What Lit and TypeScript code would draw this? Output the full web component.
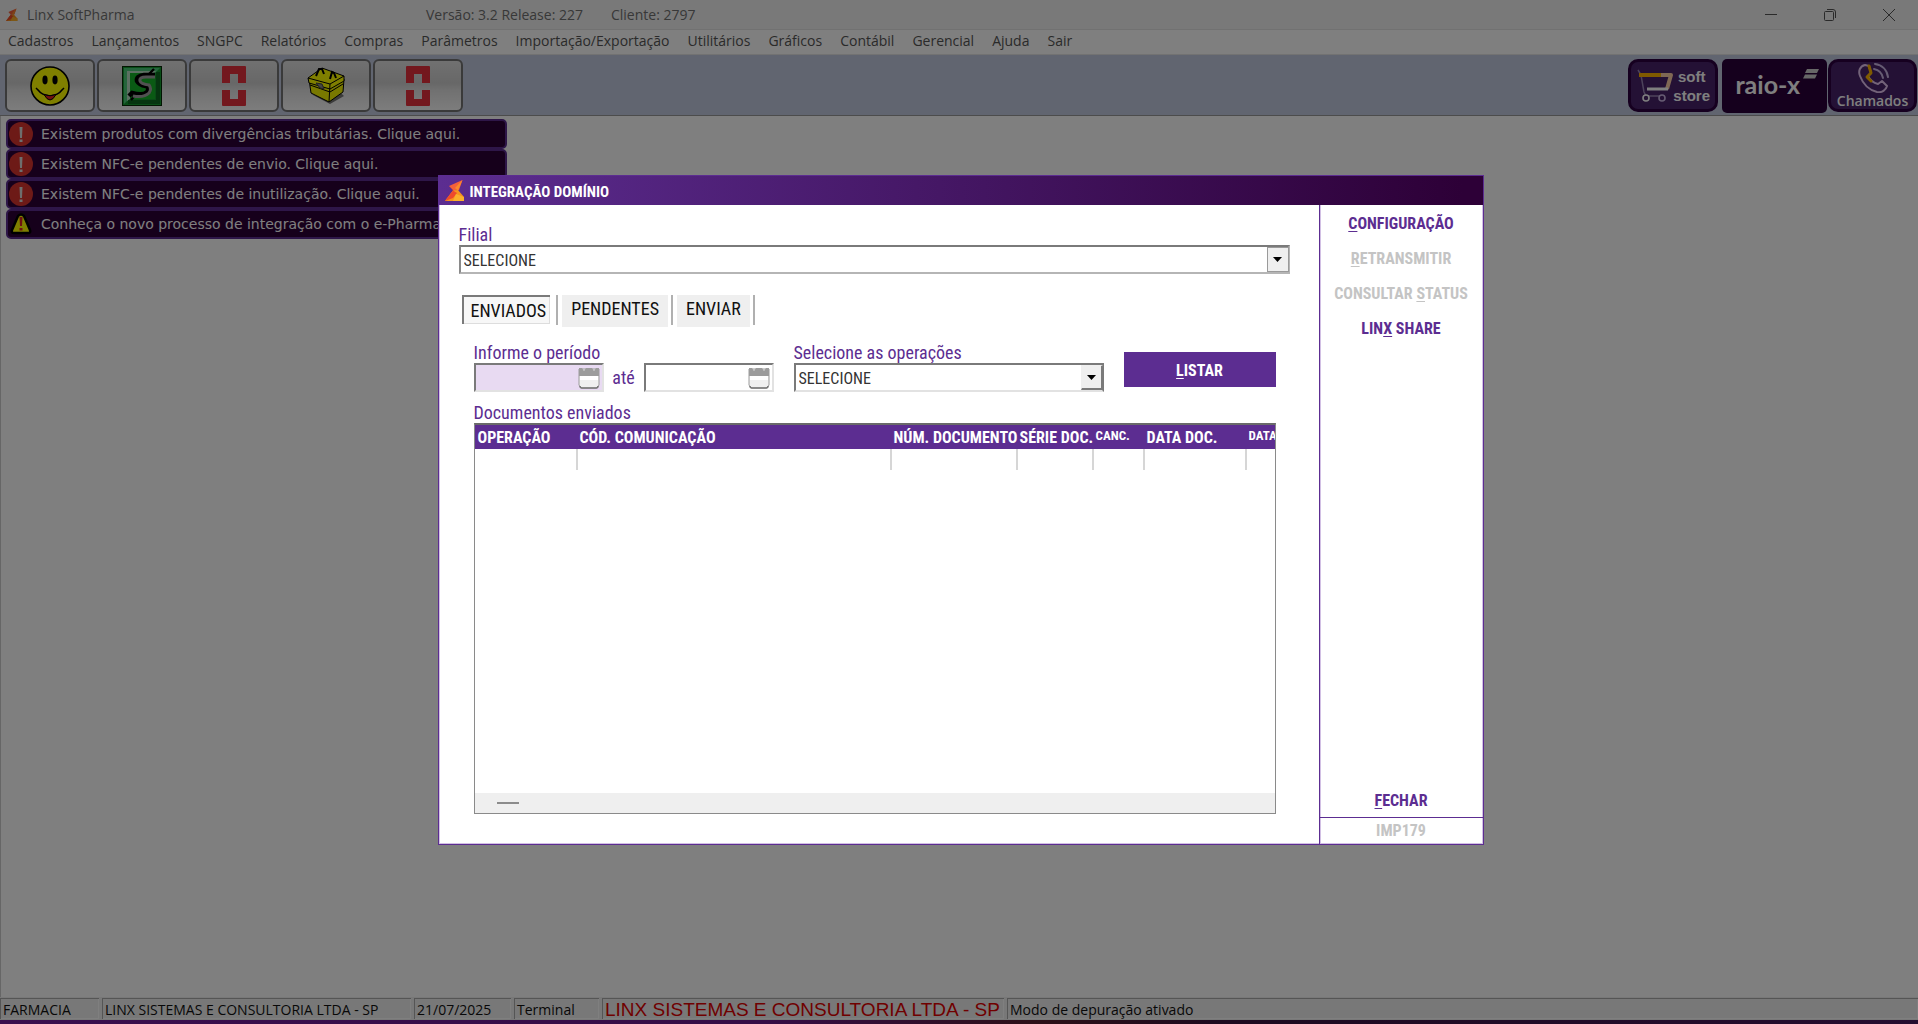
import { LitElement, html, css, svg } from "lit";
import { customElement, property, state } from "lit/decorators.js";
import { classMap } from "lit/directives/class-map.js";

const linxMark = svg`
  <path d="M17.500 0 L4 6 L9 11 L14 10Z" fill="#f4603a"/>
  <path d="M17.500 0 L10 8 L13 10.500Z" fill="#f98a2c"/>
  <path d="M4 6 L10 12 L0 21 L8 10.500Z" fill="#e8412c"/>
  <path d="M8 10.500 L13 10 L19 17 L19 21 L0 21Z" fill="#f7941e"/>
  <path d="M8 10.500 L12 13 L8 18 L0 21Z" fill="#ee4a2c"/>
  <path d="M11 14 L19 17 V21 H8Z" fill="#fbb02c"/>`;

const smiley = html`<svg width="40" height="40" viewBox="0 0 40 40" aria-hidden="true">
  <circle cx="20" cy="20" r="19" fill="#ff0" stroke="#000" stroke-width="1.600"/>
  <ellipse cx="15" cy="14" rx="2.600" ry="4.400"/><ellipse cx="25" cy="14" rx="2.600" ry="4.400"/>
  <path d="M6 22 L9 25 M34 22 L31 25 M8 24 C11 28 15 29.500 20 30 C25 29.500 29 28 32 24" fill="none" stroke="#000" stroke-width="1.500"/>
  <path d="M14 28.500 Q20 31 26 28.500 Q23 34 20 34 Q17 34 14 28.500Z" fill="#e02020" stroke="#000"/>
</svg>`;

const dollarTile = html`<svg width="40" height="40" viewBox="0 0 40 40" aria-hidden="true">
  <rect width="40" height="40" fill="#062a06"/>
  <rect x="1" y="1" width="38" height="38" fill="#129a2e"/>
  <path d="M2 2 H38 L33 7 H7 V33 L2 38Z" fill="#4cc878"/>
  <path d="M5 5 H34 L32 7 H8 V33 L5 35Z" fill="#b8e0c4"/>
  <rect x="8" y="7" width="25" height="26" fill="#14b428"/>
  <path d="M34 6 H38 V38 H6 V34 H34Z" fill="#0c6a20"/>
  <path d="M32 3 L26 9 M9 34 L15 27" stroke="#000" stroke-width="2.400"/>
  <path d="M33 9 H22 Q14 10 15 15 Q17 19 24 20 Q28 22 25 26 Q21 30 10 27 L7 30" fill="none" stroke="#000" stroke-width="4.500"/>
  <path d="M33 11 H24 Q17 11 18 15 Q19 18 27 19 Q30 23 27 27 Q22 32 11 30" fill="none" stroke="#a3a3a3" stroke-width="3"/>
</svg>`;

const redCross = html`<svg width="24" height="40" viewBox="0 0 24 40" aria-hidden="true">
  <path d="M1 0 H23 Q24 0 24 1 V17 H16 V8 H8 V17 H0 V1 Q0 0 1 0Z" fill="#e6303c"/>
  <path d="M0 24 H8 V33 H16 V24 H24 V39 Q24 40 23 40 H1 Q0 40 0 39Z" fill="#e6303c"/>
</svg>`;

const toolbox = html`<svg width="38" height="38" viewBox="0 0 38 38" aria-hidden="true">
  <path d="M4 27 L23 37 L37 29 L34 26 L22 33Z" fill="#777"/>
  <path d="M2 12 L4 26 L22 35 L36 25 L37 12 L20 18Z" fill="#f2f200" stroke="#000"/>
  <path d="M1 11 L15 1 L37 9 L37 14 L23 22 L2 16Z" fill="#ff0" stroke="#000"/>
  <path d="M1 11 L23 17 L37 9 M23 17 L22 35 M3 18 L23 25 L36 17" fill="none" stroke="#000"/>
  <path d="M9 9 L12 2 L15 2 L17 7 M23 12 L25 5 L27 6 L29 11" fill="none" stroke="#000" stroke-width="2"/>
  <path d="M9 16 L15 17 L17 22 L13 21Z" fill="#888" stroke="#444"/>
</svg>`;

const cart = html`<svg width="36" height="34" viewBox="0 0 36 34" aria-hidden="true" fill="none">
  <path d="M1 1 L4 6 L7 23 L9 27 H25" stroke="#9a86b6" stroke-width="1.500"/>
  <path d="M2 6 H24" stroke="#ffb400" stroke-width="4"/>
  <path d="M24 6 H34 L30 20" stroke="#ffd0a8" stroke-width="4" stroke-linejoin="round"/>
  <path d="M10 20 H31" stroke="#fff" stroke-width="3"/>
  <circle cx="9" cy="29" r="3" stroke="#fff" stroke-width="1.600" fill="#48226a"/>
  <circle cx="25" cy="29" r="3" stroke="#cdb8e6" stroke-width="1.600" fill="#48226a"/>
</svg>`;

const phone = html`<svg width="32" height="30" viewBox="0 0 32 30" aria-hidden="true" fill="none" stroke-linecap="round" stroke-linejoin="round">
  <path d="M8 2 C3 3 1 8 3 13 C6 21 12 27 20 29 C25 30 29 27 30 23 L25 18 L21 21 C17 20 13 17 11 13 L14 10 L12 3 Z" stroke="#e6c6f2" stroke-width="2"/>
  <path d="M12 3 L14 10 L10 14 L14 18" stroke="#ffb400" stroke-width="3"/>
  <path d="M17 6 C22 7 25 10 26 15 M18 1 C25 2 30 7 31 14" stroke="#cdb8e6" stroke-width="2"/>
</svg>`;

const errorIcon = html`<svg width="24" height="24" viewBox="0 0 24 24" aria-hidden="true">
  <circle cx="12" cy="12" r="12" fill="#da342e"/>
  <path d="M10.500 5 H13.500 L13 16 H11Z M10.500 17.500 H13.500 V20 H10.500Z" fill="#ddd"/>
</svg>`;

const warnIcon = html`<svg width="24" height="24" viewBox="0 0 24 24" aria-hidden="true">
  <path d="M9 4 Q12 1 15 4 L21 18 Q22 21 19 21 H5 Q2 21 3 18Z" fill="#ff0" stroke="#000" stroke-width="2.500"/>
  <path d="M10.500 5 H13.500 L13 14 H11Z M10.500 16 H13.500 V18.500 H10.500Z" fill="#d22"/>
</svg>`;

const calendarIcon = html`<svg width="22" height="22" viewBox="0 0 22 22" aria-hidden="true">
  <path d="M1 2 H21 V18 L19 21 H3 L1 18Z" fill="#f0f0f0" stroke="#9c9c9c"/>
  <path d="M2 9 H20 V13 H2Z" fill="#fff"/>
  <path d="M2 19 Q2 21 4 21 H18 Q20 21 20 19" fill="none" stroke="#777" stroke-width="1.500"/>
  <path d="M1 1 H4 L6 4 L8 1 H14 L16 4 L18 1 H21 V9 H1Z" fill="#9c9c9c"/>
</svg>`;

const shared = css`
  * { box-sizing: border-box; }
  button { font: inherit; color: inherit; background: none; border: 0; padding: 0; margin: 0; }
  svg { display: block; flex: none; }
`;

@customElement("combo-box")
export class ComboBox extends LitElement {
  @property() label = "";
  @property() variant = "raised";
  static styles = [shared, css`
    :host { display: block; font: 18px/20px "Roboto Condensed", "Liberation Sans", sans-serif; color: #5c2d91; }
    label { display: block; }
    .box { display: grid; }
    .box > * { grid-area: 1 / 1; }
    select {
      appearance: none; width: 100%; height: 29px; margin: 0; padding: 2px 24px 0 3px; border-radius: 0;
      font: 16px/20px "Roboto Condensed", "Liberation Sans", sans-serif; color: #333; background: #fff;
      border: 2px solid; border-color: #7a7a7a #b5b5b5 #b5b5b5 #8a8a8a;
    }
    .sunken select { border-color: #7a7a7a #7a7a7a #e2e2e2 #7a7a7a; }
    .arrow {
      justify-self: end; align-self: center; width: 22px; height: 25px; display: grid; place-items: center;
      margin-right: 1px; background: #efefef; border: 1px solid #9a9a9a; pointer-events: none;
    }
    .sunken .arrow { border-width: 1px 2px 2px 1px; border-color: #efefef #7a7a7a #7a7a7a #efefef; }
  `];
  render() {
    return html`<label for="s">${this.label}</label>
      <div class="box ${this.variant}">
        <select id="s"><option>SELECIONE</option></select>
        <span class="arrow"><svg width="9" height="5" viewBox="0 0 9 5"><path d="M0 0 H9 L4.500 5Z"/></svg></span>
      </div>`;
  }
}

@customElement("integration-dialog")
export class IntegrationDialog extends LitElement {
  @state() private tab = "ENVIADOS";
  static styles = [shared, css`
    :host {
      display: flex; flex-direction: column; position: relative; width: min(1046px, 98vw); min-height: 670px;
      background: #fff; border: 1px solid #5c2d91; box-shadow: inset -1px -1px #d2c0e4, inset 1px 0 #d2c0e4;
      font: 18px/20px "Roboto Condensed", "Liberation Sans", sans-serif; color: #5c2d91;
    }
    header {
      display: flex; align-items: center; gap: 5px; height: 29px; padding-left: 6px;
      background: linear-gradient(90deg, #5c2d91, #2d0037 98%); color: #fff;
    }
    h1 { margin: 0; padding-top: 2px; font-size: 15px; line-height: 24px; font-weight: 700; }
    .columns { display: flex; flex: 1; }
    .main { flex: 1; min-width: 0; display: flex; flex-direction: column; padding: 20px 29px 30px 20px; }
    .tabs { display: flex; align-items: flex-start; margin: 21px 0 16px 2px; height: 32px; color: #111; }
    .tab { height: 32px; padding: 0 9px 4px; background: #efefef; }
    .tab.on { height: 29px; padding: 1px 4px 0 7px; margin-left: 1px; background: #f7f7f7; border: solid #7a7a7a; border-width: 2px 0 0 2px; box-shadow: inset -1px -1px #ddd; }
    .sep { width: 2px; height: 30px; margin: 0 4px 0 3px; background: #b0b0b0; }
    .tab.on + .sep { margin-left: 6px; }
    .panel { flex: 1; display: flex; flex-direction: column; padding: 0 14px 0 15px; min-width: 0; }
    .filters { display: grid; grid-template-columns: auto 1fr 152px; gap: 20px; align-items: end; margin-bottom: 11px; }
    .period { display: grid; grid-template-columns: 130px 40px 130px; align-items: center; }
    .period .caption { grid-column: 1 / -1; }
    .period .until { text-align: center; }
    .date { display: flex; height: 29px; border: 2px solid; border-color: #7a7a7a #e2e2e2 #e2e2e2 #7a7a7a; background: #fff; align-items: center; padding-right: 2px; }
    .date.lit { background: #e8daf2; }
    .date input { flex: 1; min-width: 0; height: 24px; border: 0; padding: 0 3px; background: none; font: inherit; }
    .list-btn { height: 35px; margin-bottom: 5px; padding-top: 2px; background: #5c2d91; color: #fff; font-size: 16px; font-weight: 700; }
    u { text-underline-offset: 2px; text-decoration-thickness: 1px; }
    .grid { flex: 1; display: flex; flex-direction: column; overflow: hidden; border: 1px solid #8a8a8a; border-top: 2px solid #6a6a6a; min-width: 0; }
    .scroll { flex: 1; overflow: hidden; }
    table { width: 891px; table-layout: fixed; border-collapse: collapse; }
    thead tr { background: #5c2d91; color: #fff; }
    th { height: 24px; padding: 2px 0 0 3px; text-align: left; font-size: 16px; line-height: 20px; font-weight: 700; white-space: nowrap; }
    th.small { font-size: 13px; line-height: 16px; vertical-align: top; padding-top: 3px; }
    td { height: 21px; padding: 0; border-right: 2px solid #d6d6d6; }
    .op { width: 102px; } .cod { width: 314px; } .num { width: 126px; } .ser { width: 76px; } .can { width: 51px; } .dat { width: 102px; } .last { width: 120px; }
    .track { height: 20px; padding: 9px 22px 0; background: #efefef; }
    .thumb { width: 22px; height: 2px; background: #8c8c8c; }
    aside { width: 164px; display: flex; flex-direction: column; border-left: 1px solid #5c2d91; box-shadow: inset 1px 0 #d2c0e4; font-size: 16px; font-weight: 700; }
    aside button { height: 35px; padding-top: 2px; }
    aside button:disabled { color: #c4c4c4; }
    .spacer { flex: 1; }
    .code { height: 27px; line-height: 26px; text-align: center; color: #c4c4c4; border-top: 1px solid #5c2d91; }
  `];
  private key(before: string, k: string, after: string) {
    return html`${before}<u>${k}</u>${after}`;
  }
  render() {
    const tabs = ["ENVIADOS", "PENDENTES", "ENVIAR"];
    return html`
      <header><svg width="20" height="22" viewBox="0 0 20 22" aria-hidden="true">${linxMark}</svg><h1>INTEGRAÇÃO DOMÍNIO</h1></header>
      <div class="columns">
        <div class="main">
          <combo-box label="Filial"></combo-box>
          <div class="tabs" role="tablist">
            ${tabs.map(t => html`<button role="tab" aria-selected=${this.tab === t} class=${classMap({ tab: true, on: this.tab === t })} @click=${() => (this.tab = t)}>${t}</button><span class="sep"></span>`)}
          </div>
          <div class="panel">
            <div class="filters">
              <div class="period">
                <label class="caption" for="from">Informe o período</label>
                <div class="date lit"><input id="from"><button aria-label="Abrir calendário">${calendarIcon}</button></div>
                <label class="until" for="to">até</label>
                <div class="date"><input id="to"><button aria-label="Abrir calendário">${calendarIcon}</button></div>
              </div>
              <combo-box label="Selecione as operações" variant="sunken"></combo-box>
              <button class="list-btn">${this.key("", "L", "ISTAR")}</button>
            </div>
            <div class="caption" id="docs">Documentos enviados</div>
            <div class="grid">
              <div class="scroll">
                <table aria-labelledby="docs">
                  <thead><tr>
                    <th class="op">OPERAÇÃO</th><th class="cod">CÓD. COMUNICAÇÃO</th><th class="num">NÚM. DOCUMENTO</th><th class="ser">SÉRIE DOC.</th>
                    <th class="can small">CANC.</th><th class="dat">DATA DOC.</th><th class="last small">DATA</th>
                  </tr></thead>
                  <tbody><tr><td></td><td></td><td></td><td></td><td></td><td></td><td></td></tr></tbody>
                </table>
              </div>
              <div class="track"><div class="thumb"></div></div>
            </div>
          </div>
        </div>
        <aside>
          <button>${this.key("", "C", "ONFIGURAÇÃO")}</button>
          <button disabled>${this.key("", "R", "ETRANSMITIR")}</button>
          <button disabled>${this.key("CONSULTAR ", "S", "TATUS")}</button>
          <button>${this.key("LIN", "X", " SHARE")}</button>
          <span class="spacer"></span>
          <button>${this.key("", "F", "ECHAR")}</button>
          <div class="code">IMP179</div>
        </aside>
      </div>`;
  }
}

@customElement("app-root")
export class AppRoot extends LitElement {
  static styles = [shared, css`
    :host { display: flex; flex-direction: column; position: relative; min-height: 100vh; overflow: hidden; background: #fff; font: 14px/20px "Open Sans", "Noto Sans", sans-serif; color: #555; }
    .titlebar { display: flex; align-items: center; height: 30px; background: #f3f3f3; border-bottom: 1px solid #e2e2e2; padding-left: 6px; color: #707070; }
    .brand { display: flex; align-items: center; gap: 9px; flex: 0 0 420px; }
    .client { margin-left: 28px; }
    .controls { margin-left: auto; display: flex; }
    .controls button { width: 59px; height: 28px; display: grid; place-items: center; }
    .menu { display: flex; gap: 18px; height: 25px; padding: 0 0 0 8px; border-bottom: 1px solid #e4e4e4; }
    .menu button { line-height: 22px; height: 22px; }
    .toolbar { display: flex; align-items: flex-start; gap: 2px; height: 61px; padding: 4px 1px 0 5px; background: #c2cae0; border-bottom: 1px solid #999; }
    .tool { width: 90px; height: 53px; display: grid; place-items: center; border: 2px solid #757575; border-radius: 6px; background: linear-gradient(#e2e2e2, #cfcfcf 45%, #e2e2e2 60%, #fafafa); }
    .gap { flex: 1; }
    .promo { height: 53px; color: #fff; border-radius: 10px; }
    .store { width: 90px; margin-right: 2px; display: flex; align-items: center; justify-content: space-between; padding: 0 5px 0 6px; background: #48226a; border: 3px solid #2d0040; font: 700 15px/19px "Liberation Sans", sans-serif; }
    .rx { width: 105px; height: 54px; display: flex; justify-content: flex-end; gap: 3px; padding: 10px 8px 0 0; background: #2a003a; border-radius: 5px; font: 700 25px/30px Lato, sans-serif; }
    .calls { width: 89px; margin-left: -1px; display: flex; flex-direction: column; align-items: center; justify-content: flex-end; background: #48226a; border: 3px solid #2d0040; font: 600 14px/16px "Open Sans", sans-serif; }
    .desk { flex: 1; display: flex; flex-direction: column; align-items: flex-start; padding: 3px 0 0 5px; border-left: 1px solid #ccc; }
    .alert { width: 501px; height: 30px; display: flex; align-items: center; gap: 8px; padding-left: 1px; text-align: left; white-space: nowrap; background: #2d0037; border: 2px solid #5c2d91; border-radius: 5px; color: #fff; font: 14px/20px "DejaVu Sans", Verdana, sans-serif; }
    .status { display: flex; gap: 3px; height: 23px; background: #f0f0f0; color: #111; }
    .cell { height: 21px; margin-top: 1px; padding: 0 0 0 2px; border: solid #aaa; border-width: 1px 0 0 1px; box-shadow: inset -1px -1px #fff; white-space: nowrap; line-height: 22px; overflow: hidden; }
    .c1 { width: 99px; } .c2 { width: 309px; } .c3 { width: 97px; } .c4 { width: 85px; } .c5 { width: 402px; color: #e00000; font-size: 19px; font-family: "Liberation Sans", sans-serif; } .c6 { flex: 1; }
    .strip { height: 4px; background: linear-gradient(90deg, #741c9c, #6a1a8c 40%, #5a2030 54%, #3a1440 64%, #4a1a60); }
    .veil { position: absolute; inset: 0; display: flex; justify-content: center; align-items: center; padding: 0 0 4px 3px; background: rgba(0, 0, 0, .5); }
  `];
  render() {
    const menu = ["Cadastros", "Lançamentos", "SNGPC", "Relatórios", "Compras", "Parâmetros", "Importação/Exportação", "Utilitários", "Gráficos", "Contábil", "Gerencial", "Ajuda", "Sair"];
    const tools: [string, unknown][] = [["Clientes", smiley], ["Financeiro", dollarTile], ["Farmácia", redCross], ["Produtos", toolbox], ["Farmácia popular", redCross]];
    const alerts: [unknown, string][] = [
      [errorIcon, "Existem produtos com divergências tributárias. Clique aqui."],
      [errorIcon, "Existem NFC-e pendentes de envio. Clique aqui."],
      [errorIcon, "Existem NFC-e pendentes de inutilização. Clique aqui."],
      [warnIcon, "Conheça o novo processo de integração com o e-Pharma"],
    ];
    const status = ["FARMACIA", "LINX SISTEMAS E CONSULTORIA LTDA - SP", "21/07/2025", "Terminal", "LINX SISTEMAS E CONSULTORIA LTDA - SP", "Modo de depuração ativado"];
    return html`
      <div class="titlebar">
        <span class="brand"><svg width="12" height="14" viewBox="0 0 20 22" aria-hidden="true">${linxMark}</svg>Linx SoftPharma</span>
        <span>Versão: 3.2 Release: 227</span><span class="client">Cliente: 2797</span>
        <span class="controls">
          <button aria-label="Minimizar"><svg width="12" height="12" viewBox="0 0 12 12" fill="none" stroke="#555"><path d="M0 5.500 H12"/></svg></button>
          <button aria-label="Restaurar"><svg width="12" height="12" viewBox="0 0 12 12" fill="none" stroke="#555"><rect x=".5" y="2.500" width="9" height="9" rx="1"/><path d="M3 .5 H9 Q11.500 .5 11.500 3 V9"/></svg></button>
          <button aria-label="Fechar janela"><svg width="12" height="12" viewBox="0 0 12 12" fill="none" stroke="#555"><path d="M0 0 L12 12 M12 0 L0 12"/></svg></button>
        </span>
      </div>
      <nav class="menu">${menu.map(m => html`<button>${m}</button>`)}</nav>
      <div class="toolbar">
        ${tools.map(([name, icon]) => html`<button class="tool" aria-label=${name}>${icon}</button>`)}
        <span class="gap"></span>
        <button class="promo store">${cart}<span>soft<br>store</span></button>
        <button class="promo rx">raio-x<svg width="16" height="10" viewBox="0 0 16 10" aria-hidden="true" fill="#cfcfcf"><path d="M4 0 H16 L14 4 H2Z M2 5.500 H14 L12 9.500 H0Z"/></svg></button>
        <button class="promo calls">${phone}Chamados</button>
      </div>
      <main class="desk">${alerts.map(([icon, text]) => html`<button class="alert">${icon}${text}</button>`)}</main>
      <footer>
        <div class="status">${status.map((s, i) => html`<span class="cell c${i + 1}">${s}</span>`)}</div>
        <div class="strip"></div>
      </footer>
      <div class="veil"><integration-dialog role="dialog" aria-label="Integração Domínio"></integration-dialog></div>`;
  }
}
